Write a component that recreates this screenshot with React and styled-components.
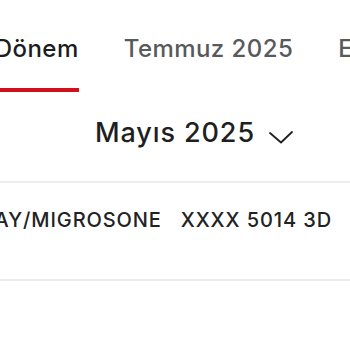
import React, { useLayoutEffect, useRef } from "react";
import styled, { createGlobalStyle } from "styled-components";

const GlobalStyle = createGlobalStyle`
  html, body {
    margin: 0;
    padding: 0;
    background: #ffffff;
  }
  body {
    font-family: "Inter", "Noto Sans", sans-serif;
    color: #1f1f1f;
  }
`;

const Page = styled.div`
  width: 350px;
  height: 350px;
  overflow: hidden;
  background: #ffffff;
  display: flex;
  flex-direction: column;
`;

const TabStrip = styled.div`
  display: flex;
  gap: 45px;
  padding-top: 37px;
  overflow: hidden;
  white-space: nowrap;
`;

const Tab = styled.div`
  flex: none;
  font-size: 24px;
  line-height: 24px;
  font-weight: 500;
  letter-spacing: 0.45px;
  color: ${(p) => (p.$active ? "#1c1c1c" : "#58595b")};
  padding-bottom: 27px;
  border-bottom: 4px solid ${(p) => (p.$active ? "#d0101b" : "transparent")};
`;

const MonthRow = styled.div`
  display: flex;
  justify-content: center;
  align-items: flex-end;
  gap: 14px;
  padding: 27px 0 35px 38px;
`;

const Month = styled.span`
  font-size: 27px;
  line-height: 27px;
  font-weight: 500;
  letter-spacing: 0.9px;
  color: #1f1f1f;
`;

const ChevronBox = styled.span`
  display: flex;
  padding-bottom: 2px;
`;

const Divider = styled.div`
  height: 2px;
  background: #ececec;
`;

const CardRow = styled.div`
  height: 96px;
  display: flex;
  justify-content: flex-end;
  align-items: flex-start;
  gap: 19px;
  padding: 27px 18px 0 0;
  box-sizing: border-box;
  overflow: hidden;
  white-space: nowrap;
`;

const CardText = styled.span`
  flex: none;
  font-size: 20px;
  line-height: 20px;
  font-weight: 500;
  letter-spacing: 0.9px;
  color: #222222;
`;

function Chevron() {
  return (
    <svg width="24" height="13" viewBox="0 0 24 13" fill="none">
      <path
        d="M1 2 L12 11.5 L23 1"
        stroke="#1f1f1f"
        strokeWidth="1.8"
        strokeLinecap="round"
        strokeLinejoin="round"
      />
    </svg>
  );
}

const tabs = ["Geçmiş Dönem", "Temmuz 2025", "Ekstre Detayı"];

function App() {
  const stripRef = useRef(null);
  const firstRef = useRef(null);

  useLayoutEffect(() => {
    const strip = stripRef.current;
    const first = firstRef.current;
    if (strip && first) {
      strip.scrollLeft = first.offsetLeft + first.offsetWidth - 79;
    }
  }, []);

  return (
    <Page>
      <GlobalStyle />
      <TabStrip ref={stripRef}>
        {tabs.map((t, i) => (
          <Tab key={t} $active={i === 0} ref={i === 0 ? firstRef : null}>
            {t}
          </Tab>
        ))}
      </TabStrip>
      <MonthRow>
        <Month>Mayıs 2025</Month>
        <ChevronBox>
          <Chevron />
        </ChevronBox>
      </MonthRow>
      <Divider />
      <CardRow>
        <CardText>MONEYPAY/MIGROSONE</CardText>
        <CardText>XXXX 5014 3D</CardText>
      </CardRow>
      <Divider />
    </Page>
  );
}

export default App;
